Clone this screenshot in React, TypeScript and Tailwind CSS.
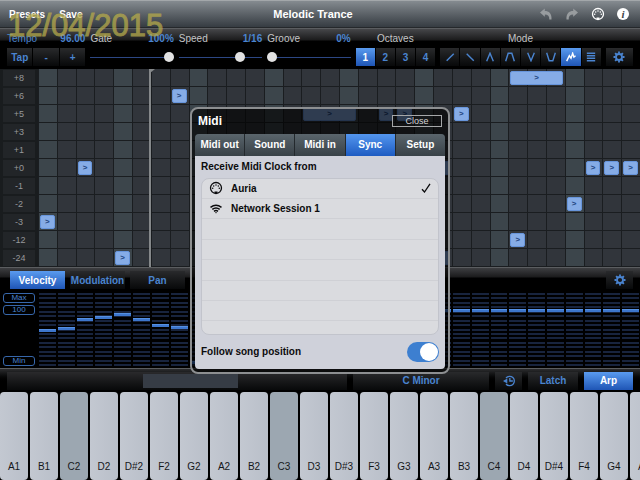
import { useState, type ReactNode } from 'react';
import clsx from 'clsx';

type Note = { row: number; col: number; span?: number };

const steps = Array.from({ length: 32 }, (_, i) => i);
const stripes = Array.from({ length: 17 }, (_, i) => i);
const pitches = ['+8', '+6', '+5', '+3', '+1', '+0', '-1', '-2', '-3', '-12', '-24'];

const notes: Note[] = [
  { row: 0, col: 25, span: 3 },
  { row: 1, col: 7 },
  { row: 2, col: 14, span: 3 },
  { row: 2, col: 18 },
  { row: 2, col: 19 },
  { row: 2, col: 22 },
  { row: 5, col: 2 },
  { row: 5, col: 21 },
  { row: 5, col: 29 },
  { row: 5, col: 30 },
  { row: 5, col: 31 },
  { row: 7, col: 28 },
  { row: 8, col: 0 },
  { row: 9, col: 25 },
  { row: 10, col: 4 },
  { row: 10, col: 21 },
];

// distance of each bar from the top of the lane, in percent
const velocities = [49, 46, 34, 31, 27, 34, 43, 45, 93];

const keys = ['A1', 'B1', 'C2', 'D2', 'D#2', 'F2', 'G2', 'A2', 'B2', 'C3', 'D3', 'D#3', 'F3', 'G3', 'A3', 'B3', 'C4', 'D4', 'D#4', 'F4', 'G4', 'A4'];

const modes = [
  { name: 'Up', d: 'M2 10.500 10.500 2' },
  { name: 'Down', d: 'M2 2 10.500 10.500' },
  { name: 'Up down', d: 'M2 11 6 1.500 10 11' },
  { name: 'Up down repeat', d: 'M.8 11 3.800 1.500h4.400l3 9.500' },
  { name: 'Down up', d: 'M2 1 6 10.500 10 1' },
  { name: 'Down up repeat', d: 'M.8 1 3.800 10.500h4.400l3-9.500' },
  { name: 'Random', d: 'M.8 11 4 4.500 6 7.500 8 1.500 9.500 6 11.500 4.500' },
  { name: 'Chord', d: 'M1 1.500h10M1 4.500h10M1 7.500h10M1 10.500h10' },
];

function BarButton({ label, active, className, children, onClick }: { label?: string; active?: boolean; className?: string; children: ReactNode; onClick?: () => void }) {
  return (
    <button
      aria-label={label}
      onClick={onClick}
      className={clsx(
        'flex h-[18px] min-w-0 items-center justify-center text-[10px] font-bold',
        active ? 'bg-linear-to-b from-[#5a9bef] to-[#1f55b5] text-white' : 'bg-linear-to-b from-[#292a2c] to-[#08090a] text-[#4a84d0]',
        className,
      )}
    >
      {children}
    </button>
  );
}

function Gear() {
  return (
    <svg viewBox="0 0 12 12" className="h-3 w-3" fill="none" stroke="currentColor">
      <circle cx="6" cy="6" r="3" strokeWidth="1.8" />
      <path strokeWidth="1.8" d="M6 .5v2M6 9.500v2M.5 6h2M9.500 6h2M2.100 2.100l1.400 1.400M8.500 8.500l1.400 1.400M2.100 9.900l1.400-1.400M8.500 3.500l1.400-1.400" />
    </svg>
  );
}

function MidiIcon() {
  return (
    <svg viewBox="0 0 14 14" className="h-3.5 w-3.5" fill="none" stroke="currentColor">
      <circle cx="7" cy="7" r="5.500" strokeWidth="1.300" />
      <g fill="currentColor" stroke="none">
        <circle cx="3.700" cy="7.200" r=".75" />
        <circle cx="4.700" cy="4.900" r=".75" />
        <circle cx="7" cy="4" r=".75" />
        <circle cx="9.300" cy="4.900" r=".75" />
        <circle cx="10.300" cy="7.200" r=".75" />
        <path d="M5.500 10.500h3v1.500h-3z" />
      </g>
    </svg>
  );
}

function WifiIcon() {
  return (
    <svg viewBox="0 0 14 14" className="h-3.5 w-3.5" fill="none" stroke="currentColor" strokeWidth="1.500">
      <path d="M1.500 5.300q5.500-4.200 11 0M3.300 7.400q3.700-2.900 7.400 0M5 9.300q2-1.500 4 0" />
      <path d="M5.900 10.200h2.200L7 11.600z" fill="currentColor" stroke="none" />
    </svg>
  );
}

function Slider({ label, value, position }: { label: string; value: string; position: number }) {
  const id = label.toLowerCase();
  return (
    <div className="min-w-0">
      <div className="flex h-[19px] items-center justify-between">
        <label htmlFor={id}>{label}</label>
        <span className="font-bold text-[#4a84d0]">{value}</span>
      </div>
      <input
        id={id}
        type="range"
        defaultValue={position}
        className="block h-[18px] w-full appearance-none bg-transparent [&::-webkit-slider-runnable-track]:h-px [&::-webkit-slider-runnable-track]:bg-[#2c4784] [&::-webkit-slider-thumb]:-mt-[5px] [&::-webkit-slider-thumb]:h-[10px] [&::-webkit-slider-thumb]:w-[10px] [&::-webkit-slider-thumb]:appearance-none [&::-webkit-slider-thumb]:rounded-full [&::-webkit-slider-thumb]:bg-[#e2e2e2]"
      />
    </div>
  );
}

function MidiDialog() {
  const [tab, setTab] = useState('Sync');
  const [source, setSource] = useState('Auria');
  const sources = [
    { name: 'Auria', icon: <MidiIcon /> },
    { name: 'Network Session 1', icon: <WifiIcon /> },
  ];

  return (
    <div role="dialog" aria-label="Midi" className="w-[260px] rounded-lg border-2 border-[#8d8f91] bg-black/65 px-[3px] pb-[3px] text-[10px] font-bold">
      <div className="flex h-[25px] items-center justify-between px-[3px]">
        <h2 className="text-xs text-white">Midi</h2>
        <button className="h-3 w-[50px] border border-[#a5a7a9] text-[9px] leading-[10px] font-normal text-[#d5d6d8]">Close</button>
      </div>
      <div className="flex h-[22px] gap-px overflow-hidden rounded-t bg-[#23292d]">
        {['Midi out', 'Sound', 'Midi in', 'Sync', 'Setup'].map(t => (
          <button key={t} onClick={() => setTab(t)} className={clsx('flex-1 text-white', t === tab ? 'bg-linear-to-b from-[#5496ee] to-[#1d5bc2]' : 'bg-linear-to-b from-[#5a656c] to-[#384147]')}>
            {t}
          </button>
        ))}
      </div>
      <div className="rounded-b bg-[#cfd1da] px-1.5 pt-1 text-[#0b0b0d]">
        <h3 className="mb-1 leading-[14px]">Receive Midi Clock from</h3>
        <ul className="flex h-[157px] flex-col rounded-lg border border-[#c2c4cc] bg-[#dadbdf] pb-3">
          {sources.map(s => (
            <li key={s.name} className="flex flex-1 border-b border-[#cfd0d5]">
              <button onClick={() => setSource(s.name)} className="flex flex-1 items-center gap-2 px-[7px] text-left">
                {s.icon}
                <span className="flex-1">{s.name}</span>
                {source === s.name && (
                  <svg viewBox="0 0 10 10" className="h-[10px] w-[10px]" fill="none" stroke="currentColor" strokeWidth="1.300">
                    <path d="M1 6.200 3.500 9 9 .8" />
                  </svg>
                )}
              </button>
            </li>
          ))}
          {[1, 2, 3, 4, 5].map(i => <li key={i} className="flex-1 border-b border-[#cfd0d5]" />)}
        </ul>
        <div className="flex h-[34px] items-center justify-between">
          <label htmlFor="follow">Follow song position</label>
          <input
            id="follow"
            type="checkbox"
            defaultChecked
            className="h-5 w-8 appearance-none rounded-full bg-[#9a9ca3] p-px before:block before:h-[18px] before:w-[18px] before:rounded-full before:bg-white checked:bg-[#3d7fd0] checked:before:ml-3"
          />
        </div>
      </div>
    </div>
  );
}

export default function App() {
  const [octave, setOctave] = useState(1);
  const [mode, setMode] = useState('Random');
  const [lane, setLane] = useState('Velocity');

  return (
    <div className="relative flex min-h-screen flex-col overflow-hidden bg-black font-['Liberation_Sans',Arial,sans-serif] text-[10px] text-[#c4c5c7]">
      {/* Title bar */}
      <header className="grid h-7 grid-cols-3 items-center border-t border-b border-t-[#a3a7aa] border-b-[#25282b] bg-linear-to-b from-[#858b90] to-[#363c42] px-[9px] font-bold text-white">
        <div className="flex gap-3.5">
          <button>Presets</button>
          <button>Save</button>
        </div>
        <h1 className="pr-3.5 text-center text-[11px]">Melodic Trance</h1>
        <div className="flex items-center justify-end gap-3 pr-[2px]">
          <button aria-label="Undo" className="text-[#989c9f]">
            <svg viewBox="0 0 14 14" className="h-3.5 w-3.5" fill="currentColor">
              <path d="M1 5.500 5.800 1.500V4c4.200 0 7.200 2.500 6.700 8.500h-2.200c.2-3.300-1.300-5-4.500-5v2.300z" />
            </svg>
          </button>
          <button aria-label="Redo" className="text-[#989c9f]">
            <svg viewBox="0 0 14 14" className="h-3.5 w-3.5" fill="currentColor">
              <path d="M13 5.500 8.200 1.500V4C4 4 1 6.500 1.500 12.500h2.200c-.2-3.300 1.300-5 4.500-5v2.300z" />
            </svg>
          </button>
          <button aria-label="Midi"><MidiIcon /></button>
          <button className="h-3 w-3 rounded-full bg-white font-['Liberation_Serif',serif] text-[11px] leading-3 text-[#3d4348] italic">i</button>
        </div>
      </header>

      {/* Arpeggiator settings */}
      <section className="border-t border-[#5b5d60] bg-[linear-gradient(#454649,#1b1b1c_11px,#000_12px)] px-[7px] pb-[3px]">
        <div className="grid grid-cols-[78fr_83fr_83fr_83fr_79fr_160fr_27fr] gap-[5px]">
          <div>
            <div className="flex h-[19px] items-center justify-between text-[#4a84d0]">
              <span>Tempo</span>
              <span className="font-bold">96.00</span>
            </div>
            <div className="flex gap-px">
              <BarButton className="flex-1">Tap</BarButton>
              <BarButton className="flex-1">-</BarButton>
              <BarButton className="flex-1">+</BarButton>
            </div>
          </div>
          <Slider label="Gate" value="100%" position={100} />
          <Slider label="Speed" value="1/16" position={76} />
          <Slider label="Groove" value="0%" position={0} />
          <div>
            <div className="flex h-[19px] items-center justify-center">Octaves</div>
            <div className="flex gap-px">
              {[1, 2, 3, 4].map(n => (
                <BarButton key={n} active={n === octave} onClick={() => setOctave(n)} className="flex-1">{n}</BarButton>
              ))}
            </div>
          </div>
          <div>
            <div className="flex h-[19px] items-center justify-center">Mode</div>
            <div className="flex gap-px">
              {modes.map(m => (
                <BarButton key={m.name} label={m.name} active={m.name === mode} onClick={() => setMode(m.name)} className="flex-1">
                  <svg viewBox="0 0 12 12" className="h-[10px] w-[10px]" fill="none" stroke="currentColor" strokeWidth="1.700">
                    <path d={m.d} />
                  </svg>
                </BarButton>
              ))}
            </div>
          </div>
          <BarButton label="Arp settings" className="self-end"><Gear /></BarButton>
        </div>
      </section>

      {/* Step grid */}
      <section className="relative bg-[#1b1e21]">
        {pitches.map((pitch, row) => (
          <div key={pitch} className="flex h-[18px]">
            <div className="flex w-[38px] shrink-0 items-center bg-[#191c1e] px-[3px]">
              <span className="h-4 flex-1 bg-[#222528] text-center text-[9px] leading-4 text-[#96989a]">{pitch}</span>
            </div>
            <div className="grid flex-1 grid-cols-[repeat(32,minmax(0,1fr))]">
              {steps.map(col => (
                <div key={col} style={{ gridColumn: col + 1 }} className={clsx('row-start-1 h-[18px] border-b border-l border-[#1a1d20]', col % 4 ? 'bg-[#31353b]' : 'bg-[#3c454b]')} />
              ))}
              {notes.filter(n => n.row === row).map(n => (
                <div
                  key={n.col}
                  style={{ gridColumn: `${n.col + 1} / span ${n.span ?? 1}` }}
                  className="z-10 row-start-1 mx-[2px] mt-[2px] h-[14px] rounded-[2px] border border-[#6795dc] bg-[#86ace6] text-center text-[8px] leading-3 font-bold text-[#1f4580]"
                >
                  &gt;
                </div>
              ))}
            </div>
          </div>
        ))}
        <div className="absolute inset-y-0 right-0 left-[38px]">
          <div className="ml-[18.5%] h-full w-[2px] bg-[#85888a]">
            <svg viewBox="0 0 6 4" className="h-1 w-1.5 max-w-none" fill="#85888a"><path d="M0 0h6L1 4H0z" /></svg>
          </div>
        </div>
      </section>

      {/* Velocity lanes */}
      <section className="border-t border-[#5b5d60] bg-[linear-gradient(#3d3e41,#1b1b1c_9px,#000_10px)] pb-[2px]">
        <div className="flex items-center justify-between pt-[3px] pr-[7px] pl-[10px]">
          <div className="flex gap-[5px]">
            {['Velocity', 'Modulation', 'Pan'].map(t => (
              <BarButton key={t} active={t === lane} onClick={() => setLane(t)} className="w-[55px]">{t}</BarButton>
            ))}
          </div>
          <BarButton label="Lane settings" className="w-[27px]"><Gear /></BarButton>
        </div>
        <div className="mt-1 flex h-[73px]">
          <div className="flex w-[38px] shrink-0 flex-col gap-[2px] px-[3px] text-center text-[8px] leading-2 text-[#4a84d0]">
            <span className="rounded-[3px] border border-[#3767ab]">Max</span>
            <span className="rounded-[3px] border border-[#3767ab]">100</span>
            <span className="mt-auto rounded-[3px] border border-[#3767ab]">Min</span>
          </div>
          <div className="grid flex-1 grid-cols-[repeat(32,minmax(0,1fr))]">
            {steps.map(i => (
              <div key={i} className="relative mr-px ml-px flex flex-col justify-between">
                {stripes.map(s => <div key={s} className="h-[2px] bg-[#18243e]" />)}
                <div style={{ top: `${velocities[i] ?? 22}%` }} className="absolute inset-x-0 h-[3px] border-t border-t-[#5590e2] bg-[#3d76cc]" />
              </div>
            ))}
          </div>
        </div>
      </section>

      {/* Keyboard bar */}
      <section className="flex h-6 items-center gap-1.5 border-t border-[#5b5d60] bg-linear-to-b from-[#2c2d2f] to-black to-60% px-[7px]">
        <div className="h-[18px] flex-[340] bg-linear-to-b from-[#2a2a2c] to-[#08090a] py-[2px]">
          <div className="ml-[40%] h-3.5 w-[28%] bg-[#363c45]" />
        </div>
        <BarButton className="flex-[136]">C Minor</BarButton>
        <BarButton label="Clock" className="flex-[27]">
          <svg viewBox="0 0 14 14" className="h-3 w-3" fill="none" stroke="currentColor" strokeWidth="1.500">
            <path d="M3.500 3.500A5.500 5.500 0 1 1 3.500 10.500M8 3.500V7h3.500" />
            <path d="M0 7 5 4v6z" fill="currentColor" stroke="none" />
          </svg>
        </BarButton>
        <BarButton className="flex-[50]">Latch</BarButton>
        <BarButton active className="flex-[49]">Arp</BarButton>
      </section>

      {/* Keyboard */}
      <section className="flex min-h-[88px] flex-1 gap-[2px] overflow-hidden">
        {keys.map(k => (
          <button key={k} className={clsx('flex w-7 shrink-0 items-end justify-center rounded pb-1.5 text-[#15171a]', /^C\d/.test(k) ? 'bg-[#9ca7b1]' : 'bg-linear-to-r from-[#c3c8d1] to-[#b9bfc9]')}>
            {k}
          </button>
        ))}
      </section>

      {/* Date stamp */}
      <div className="pointer-events-none absolute top-2.5 left-2 text-[31px] leading-8 text-[#b5aa4b] opacity-75 [-webkit-text-stroke:1px_#b5aa4b]">12/04/2015</div>

      <div className="absolute inset-0 z-20 flex items-center justify-center">
        <MidiDialog />
      </div>
    </div>
  );
}
